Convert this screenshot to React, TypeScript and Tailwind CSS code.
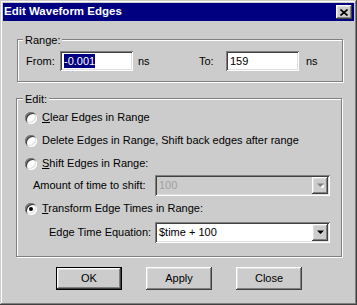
import React from "react";

const FONT = "font-['Liberation_Sans',Arial,sans-serif]";
const sunken =
  "shadow-[inset_1px_1px_#808080,inset_-1px_-1px_#ffffff,inset_2px_2px_#404040,inset_-2px_-2px_#dfdfdf]";
const raised =
  "shadow-[inset_-1px_-1px_#404040,inset_1px_1px_#ffffff,inset_-2px_-2px_#808080,inset_2px_2px_#dfdfdf]";
const etched = "border border-[#808080] shadow-[inset_1px_1px_#ffffff,1px_1px_#ffffff]";

const Radio = ({ checked }: { checked?: boolean }) => (
  <span className={`w-[12px] h-[12px] rounded-full bg-white flex items-center justify-center shrink-0 ${sunken}`}>
    {checked && <span className="w-[4px] h-[4px] rounded-full bg-black" />}
  </span>
);

const Arrow = ({ disabled }: { disabled?: boolean }) => (
  <span className={`w-[16px] h-[17px] bg-[#cccccc] flex items-center justify-center ${raised}`}>
    <svg width="7" height="5" viewBox="0 0 7 5">
      {disabled && <path d="M2 2h7l-3.5 4z" fill="#ffffff" />}
      <path d="M1 1h7l-3.5 3.5z" fill={disabled ? "#808080" : "#000000"} transform="translate(-1 -0.5)" />
    </svg>
  </span>
);

const Combo = ({ value, disabled }: { value: string; disabled?: boolean }) => (
  <div
    className={`w-[175px] h-[21px] flex items-center p-[2px] ${sunken} ${disabled ? "bg-[#cccccc]" : "bg-white"}`}
  >
    <span className={`flex-1 pl-[2px] ${disabled ? "text-[#a0a0a0]" : "text-black"}`}>{value}</span>
    <Arrow disabled={disabled} />
  </div>
);

const Button = ({ label, isDefault }: { label: string; isDefault?: boolean }) => (
  <div className={`w-[66px] h-[23px] ${isDefault ? "border border-black" : ""}`}>
    <div className={`w-full h-full bg-[#cccccc] flex items-center justify-center ${raised}`}>{label}</div>
  </div>
);

const Row = ({ children, className = "" }: { children: React.ReactNode; className?: string }) => (
  <div className={`flex items-center ${className}`}>{children}</div>
);

export default function App() {
  return (
    <div
      className={`w-[357px] h-[305px] bg-[#cccccc] p-[3px] flex flex-col text-[11px] text-black ${FONT} shadow-[inset_-1px_-1px_#404040,inset_1px_1px_#cccccc,inset_-2px_-2px_#808080,inset_2px_2px_#ffffff]`}
    >
      {/* title bar */}
      <div className="h-[18px] bg-[#000080] flex items-center justify-between pr-[2px]">
        <span className="pl-[1px] text-white font-bold text-[11.5px] leading-none">Edit Waveform Edges</span>
        <span className={`w-[16px] h-[14px] bg-[#cccccc] flex items-center justify-center ${raised}`}>
          <svg width="8" height="7" viewBox="0 0 8 7">
            <path d="M0.5 0.5l7 6M7.5 0.5l-7 6" stroke="#000" strokeWidth="1.6" />
          </svg>
        </span>
      </div>

      <div className="flex flex-col pl-[13px]">
        {/* Range */}
        <div className={`relative mt-[18px] ml-[1px] w-[326px] h-[43px] ${etched} flex items-center pl-[8px] pt-[1px]`}>
          <span className="absolute -top-[8px] left-[5px] px-[2px] bg-[#cccccc]">Range:</span>
          <span className="w-[34px]">From:</span>
          <div className={`w-[73px] h-[20px] bg-white flex items-center pl-[4px] ${sunken}`}>
            <span className="bg-[#000080] text-white leading-[14px]">-0.001</span>
          </div>
          <span className="ml-[5px] w-[61px]">ns</span>
          <span className="w-[27px]">To:</span>
          <div className={`w-[73px] h-[20px] bg-white flex items-center pl-[4px] ${sunken}`}>159</div>
          <span className="ml-[7px]">ns</span>
        </div>

        {/* Edit */}
        <div className={`relative mt-[16px] w-[326px] h-[159px] ${etched} flex flex-col pl-[8px] pt-[7px]`}>
          <span className="absolute -top-[8px] left-[6px] px-[2px] bg-[#cccccc]">Edit:</span>
          <Row className="h-[23px] gap-[5px]">
            <Radio />
            <span>
              <u>C</u>lear Edges in Range
            </span>
          </Row>
          <Row className="h-[23px] gap-[5px]">
            <Radio />
            <span>Delete Edges in Range, Shift back edges after range</span>
          </Row>
          <Row className="h-[23px] gap-[5px]">
            <Radio />
            <span>
              <u>S</u>hift Edges in Range:
            </span>
          </Row>
          <Row className="h-[21px] pl-[8px]">
            <span className="w-[122px]">Amount of time to shift:</span>
            <Combo value="100" disabled />
          </Row>
          <Row className="h-[25px] gap-[5px]">
            <Radio checked />
            <span>
              <u>T</u>ransform Edge Times in Range:
            </span>
          </Row>
          <Row className="h-[21px] pl-[24px] mt-[1px]">
            <span className="w-[106px]">Edge Time Equation:</span>
            <Combo value="$time + 100" />
          </Row>
        </div>

        {/* buttons */}
        <div className="flex gap-[24px] mt-[10px] pl-[40px]">
          <Button label="OK" isDefault />
          <Button label="Apply" />
          <Button label="Close" />
        </div>
      </div>
    </div>
  );
}
